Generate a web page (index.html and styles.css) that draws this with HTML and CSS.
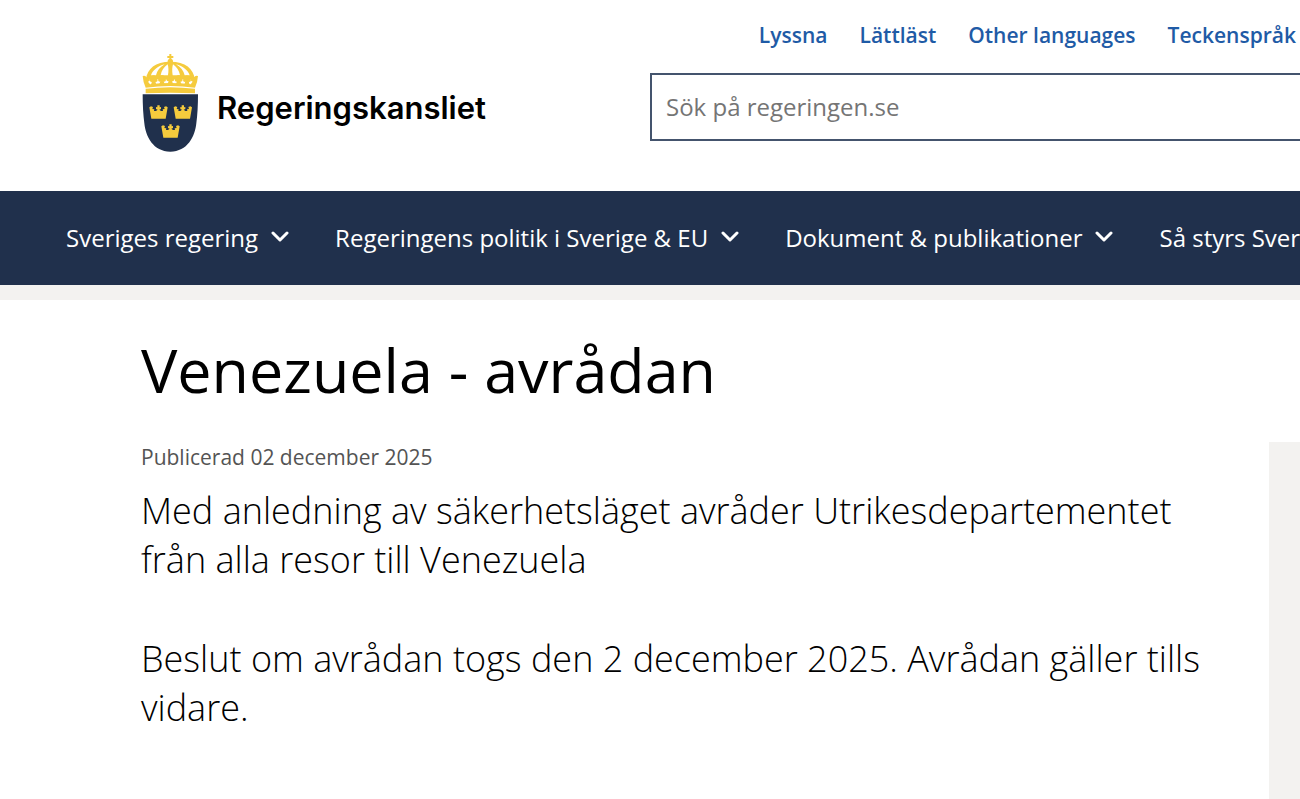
FILE: index.html
```html
<!DOCTYPE html>
<html lang="sv">
<head>
  <meta charset="UTF-8">
  <meta name="viewport" content="width=device-width, initial-scale=1">
  <title>Venezuela - avrådan</title>
  <link rel="stylesheet" href="styles.css">
</head>
<body>

<header class="header">
  <a href="#" class="logo">
    <svg class="crest" viewBox="36 25 171 297" aria-hidden="true">
      <defs>
        <g id="crown">
          <path d="M0 7 L5 4 L11 6 L9 12 L15 13 L14 18 H20 L25 14 L20 12 V6 L24 7 V1 H31 V7 L35 6 V12 L30 14 L35 18 H41 L40 13 L46 12 L44 6 L50 4 L55 7 L49 41 H6 Z"/>
        </g>
        <g id="leaf">
          <circle cx="0" cy="100" r="7"/>
          <circle cx="-6" cy="107" r="6"/>
          <circle cx="6" cy="107" r="6"/>
          <path d="M-3 105 H3 L9 124 H-9 Z"/>
        </g>
      </defs>
      <!-- krona -->
      <path fill="#f5cb3d" d="M48 104 C51 72 76 51 121 51 C166 51 191 72 194 104 Z"/>
      <g fill="#fff">
        <path d="M63 92 C67 78 83 64 104 59 C90 68 81 78 78 92 Z"/>
        <path d="M179 92 C175 78 159 64 138 59 C152 68 161 78 164 92 Z"/>
        <path d="M92 92 C94 78 102 67 113 59 C116 68 116 79 114 92 Z"/>
        <path d="M150 92 C148 78 140 67 129 59 C126 68 126 79 128 92 Z"/>
        <path d="M46 104 H196 L192 119 Q121 111 50 119 Z"/>
      </g>
      <g fill="#f5cb3d">
        <path d="M118 28 H124 V34 H130 V40 H124 V46 H118 V40 H112 V34 H118 Z"/>
        <circle cx="121" cy="50" r="8"/>
        <use href="#leaf" x="71" y="-1"/>
        <use href="#leaf" x="96" y="-2"/>
        <use href="#leaf" x="121" y="-3"/>
        <use href="#leaf" x="146" y="-2"/>
        <use href="#leaf" x="171" y="-1"/>
        <path d="M38 94 Q46 91 50 98 Q58 95 60 102 Q61 109 54 111 L60 119 Q121 111 182 119 L188 111 Q181 109 182 102 Q184 95 192 98 Q196 91 204 94 Q203 111 195 129 Q121 119 47 129 Q39 111 38 94 Z"/>
        <path d="M47 132 Q121 123 195 132 V146 Q121 142 47 146 Z"/>
      </g>
      <path fill="#20304c" d="M38 149 H204 Q204 198 199 236 C195 276 172 321 121 321 C70 321 47 276 43 236 Q38 198 38 149 Z"/>
      <g fill="#f5cb3d">
        <use href="#crown" x="58" y="181"/>
        <use href="#crown" x="131" y="181"/>
        <use href="#crown" x="94" y="238"/>
      </g>
    </svg>
    <span>Regeringskansliet</span>
  </a>

  <div class="tools">
    <ul class="links">
      <li><a href="#">Lyssna</a></li>
      <li><a href="#">Lättläst</a></li>
      <li><a href="#">Other languages</a></li>
      <li><a href="#">Teckenspråk</a></li>
    </ul>
    <form class="search">
      <input type="search" aria-label="Sök på regeringen.se" placeholder="Sök på regeringen.se">
    </form>
  </div>
</header>

<nav class="nav">
  <ul>
    <li>
      <button type="button">Sveriges regering
        <svg class="chevron" viewBox="0 0 18 12" aria-hidden="true"><path d="M2 2 L9 9 L16 2"/></svg>
      </button>
    </li>
    <li>
      <button type="button">Regeringens politik i Sverige &amp; EU
        <svg class="chevron" viewBox="0 0 18 12" aria-hidden="true"><path d="M2 2 L9 9 L16 2"/></svg>
      </button>
    </li>
    <li>
      <button type="button">Dokument &amp; publikationer
        <svg class="chevron" viewBox="0 0 18 12" aria-hidden="true"><path d="M2 2 L9 9 L16 2"/></svg>
      </button>
    </li>
    <li>
      <button type="button">Så styrs Sverige
        <svg class="chevron" viewBox="0 0 18 12" aria-hidden="true"><path d="M2 2 L9 9 L16 2"/></svg>
      </button>
    </li>
  </ul>
</nav>

<div class="page">
  <main class="content">
    <h1>Venezuela - avrådan</h1>
    <p class="published">Publicerad <time datetime="2025-12-02">02 december 2025</time></p>
    <div class="intro">
      <p>Med anledning av säkerhetsläget avråder Utrikesdepartementet från alla resor till Venezuela</p>
      <p>Beslut om avrådan togs den 2 december 2025. Avrådan gäller tills vidare.</p>
    </div>
  </main>
  <aside class="sidebar"></aside>
</div>

</body>
</html>
```

FILE: styles.css
```css
* {
  margin: 0;
  padding: 0;
  box-sizing: border-box;
}

body {
  min-height: 100vh;
  display: flex;
  flex-direction: column;
  overflow-x: hidden;
  background-color: #fff;
  color: #000;
  font-family: "Open Sans", "Noto Sans", sans-serif;
}

ul {
  list-style: none;
}

a {
  text-decoration: none;
}

/* header */
.header {
  display: grid;
  grid-template-columns: 1fr 1fr;
  padding: 20px 0 39px;
}

.logo {
  display: flex;
  align-items: center;
  gap: 18px;
  margin-top: 33px;
  padding-left: 142px;
  color: #000;
  font-family: Inter, sans-serif;
  font-size: 31px;
  font-weight: 600;
}

.logo span {
  padding-top: 10px;
}

.crest {
  flex: none;
  width: 57px;
  height: 99px;
}

.links {
  display: flex;
  justify-content: flex-end;
  gap: 32px;
  padding-right: 4px;
  font-size: 21px;
  font-weight: 600;
  line-height: 30px;
  white-space: nowrap;
}

.links a {
  color: #1f5ba6;
}

.search {
  margin-top: 23px;
}

.search input {
  display: block;
  width: 100%;
  height: 68px;
  padding: 0 14px 2px;
  border: 2px solid #44546d;
  border-right: 0;
  border-radius: 0;
  background-color: #fff;
  font-family: inherit;
  font-size: 24px;
  appearance: none;
}

.search input::placeholder {
  color: #757575;
}

/* main menu */
.nav {
  overflow: hidden;
  background-color: #20304c;
  border-bottom: 15px solid #f3f2f0;
}

.nav ul {
  display: flex;
  gap: 46px;
  padding-left: 66px;
}

.nav button {
  display: flex;
  align-items: center;
  gap: 13px;
  height: 94px;
  padding-bottom: 2px;
  border: 0;
  background: none;
  color: #fff;
  font-family: inherit;
  font-size: 24px;
  white-space: nowrap;
  cursor: pointer;
}

.chevron {
  width: 18px;
  height: 12px;
  fill: none;
  stroke: #fff;
  stroke-width: 3;
  stroke-linecap: round;
  stroke-linejoin: round;
}

/* article */
.page {
  flex: 1;
  display: flex;
  justify-content: space-between;
}

.content {
  flex: 1;
  padding: 28px 60px 40px 141px;
}

.content h1 {
  font-size: 61px;
  font-weight: 400;
  line-height: 84px;
}

.published {
  margin-top: 30px;
  color: #545454;
  font-size: 21px;
  line-height: 30px;
}

.intro {
  margin-top: 14px;
  font-size: 36px;
  font-weight: 300;
  line-height: 49px;
}

.intro p + p {
  margin-top: 50px;
}

.sidebar {
  flex: none;
  width: 31px;
  margin-top: 142px;
  background-color: #f3f2f0;
}
```
